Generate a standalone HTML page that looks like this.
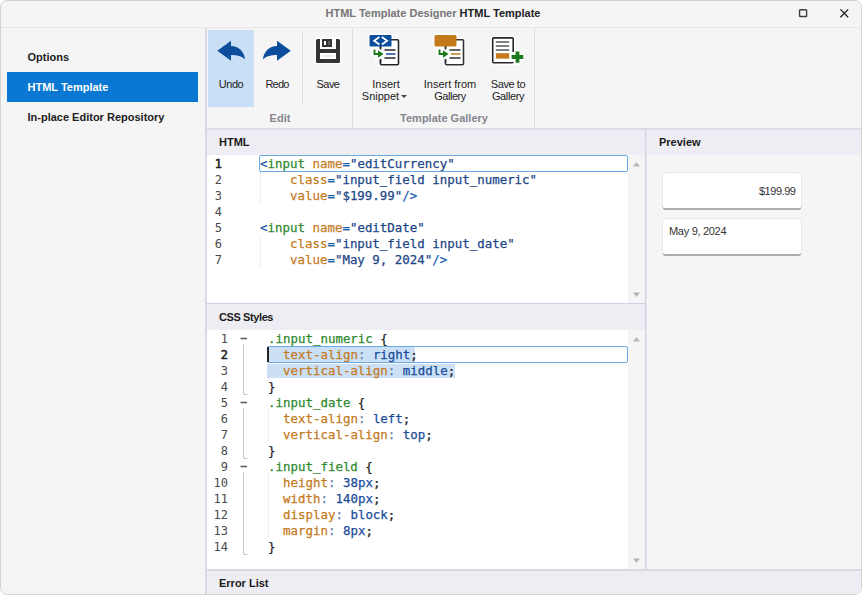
<!DOCTYPE html>
<html lang="en">
<head>
<meta charset="utf-8">
<title>HTML Template Designer</title>
<style>
*{box-sizing:border-box;margin:0;padding:0}
html,body{width:862px;height:595px;background:#fff;overflow:hidden}
body{font-family:"Liberation Sans",sans-serif;font-size:11px;color:#222;position:relative}
.abs{position:absolute}
#win{position:absolute;left:0;top:0;width:862px;height:595px;background:#f5f5f5;border:1px solid #d4d4d4;border-radius:7px;overflow:hidden}
#win>*{position:absolute}
.title{left:2px;top:0;width:860px;height:26px;text-align:center;line-height:25px;font-weight:bold;font-size:11px;color:#222}
.title .g{color:#767676}
.hl{background:#e3e3ec;height:1px}
.vl{background:#dadae5;width:2px}
.nav{left:6px;width:191px;height:30px;line-height:31px;padding-left:20.5px;font-weight:bold;color:#222}
.nav.sel{background:#0a78d3;color:#fff}
.lbl{text-align:center;line-height:12.5px;color:#222;white-space:nowrap}
.grp{font-weight:bold;color:#86868d;text-align:center}
.phead{background:#ededf3;height:25px;line-height:25px;font-weight:bold;padding-left:12px;color:#1a1a1a}
.ed{background:#fff}
.code{font-family:"DejaVu Sans Mono","Liberation Mono",monospace;font-size:12.45px;line-height:16px;white-space:pre;color:#222;-webkit-text-stroke:0.25px currentColor}
.ln b{font-weight:normal;-webkit-text-stroke:0.55px #222}.ln{font-family:"DejaVu Sans Mono","Liberation Mono",monospace;font-size:12px;line-height:16px;white-space:pre;color:#4a4a4a;text-align:right}
.b{color:#1f5fae}.g2{color:#2f8a2f}.o{color:#c47a22}.s{color:#1c4587}.c{color:#5f7fae}.n{color:#1a4c9a}.k{color:#222}.v{color:#1f5fae}
.box{background:#fff;border:1px solid #e6e6ec;border-bottom:2px solid #adadad;border-radius:4px;width:140px;height:38px;color:#333;letter-spacing:-0.45px}
</style>
</head>
<body>
<div id="win">
  <!-- title bar -->
  <div class="title"><span class="g">HTML Template Designer</span> HTML Template</div>
  <svg style="left:797px;top:7px;filter:drop-shadow(0 0 0.7px #fff)" width="11" height="11" viewBox="0 0 11 11"><rect x="1.600" y="1.700" width="7" height="6.800" rx="0.800" fill="none" stroke="#3a3a3a" stroke-width="1.400"/></svg>
  <svg style="left:838px;top:7px;filter:drop-shadow(0 0 0.7px #fff)" width="11" height="11" viewBox="0 0 11 11"><path d="M1.400 1.400 L9.200 9.200 M9.200 1.400 L1.400 9.200" stroke="#1c1c1c" stroke-width="1.300" fill="none"/></svg>
  <div class="hl" style="left:0;top:26px;width:862px;background:#e6e6ec"></div>

  <!-- left nav -->
  <div class="nav" style="top:41px">Options</div>
  <div class="nav sel" style="top:71px">HTML Template</div>
  <div class="nav" style="top:101px">In-place Editor Repository</div>
  <div class="vl" style="left:204px;top:27px;height:568px"></div>

  <!-- ribbon -->
  <div style="left:207px;top:29px;width:46px;height:77px;background:#c9dff5"></div>

  <!-- icons -->
  <svg style="left:214px;top:33px;filter:drop-shadow(0 0 0.6px #fff)" width="32" height="32" viewBox="0 0 32 32"><path d="M2.2 16.8 L16 6.8 V12 C24 12 29 17.5 30.2 25.5 C26.5 22 21.5 21 16 21 V26.8 Z" fill="#0c4e9b"/></svg>
  <svg style="left:260px;top:33px;filter:drop-shadow(0 0 0.6px #fff)" width="32" height="32" viewBox="0 0 32 32"><path d="M29.8 16.8 L16 6.8 V12 C8 12 3 17.5 1.8 25.5 C5.500 22 10.5 21 16 21 V26.800 Z" fill="#0c4e9b"/></svg>
  <svg style="left:311px;top:34px" width="32" height="32" viewBox="0 0 32 32">
    <rect x="2.5" y="2.500" width="27" height="27" rx="3" fill="#fff" opacity=".9"/>
    <rect x="4" y="4" width="24" height="24" rx="1.5" fill="#343434"/>
    <rect x="8" y="3.500" width="16" height="10.500" fill="#fff"/>
    <rect x="10" y="4" width="10" height="8" fill="#343434"/>
    <rect x="12" y="6" width="2" height="4" fill="#fff"/>
    <rect x="16.200" y="6" width="2" height="4" fill="#666"/>
    <rect x="8" y="18" width="16" height="6" fill="#fff"/>
    <rect x="10" y="20.500" width="12" height="1" fill="#ddd"/>
  </svg>
  <svg style="left:366px;top:32px" width="34" height="34" viewBox="-1 -1 34 34">
    <rect x="10.500" y="4" width="22" height="28.500" rx="2" fill="#fff" opacity=".9"/>
    <rect x="0" y="-0.500" width="25" height="14.500" rx="2" fill="#fff" opacity=".9"/>
    <path d="M3 13 H17 V26 H7 V21.500 H3 Z" fill="#fff" opacity=".9"/>
    <rect x="12.500" y="5.800" width="18" height="25" rx="1" fill="#fff" stroke="#262626" stroke-width="1.600"/>
    <rect x="9" y="14.500" width="6.500" height="11" fill="#fff"/>
    <path d="M12.500 12 V15.500 M12.500 25 V29" stroke="#262626" stroke-width="1.600"/>
    <rect x="1.500" y="1" width="22" height="11.500" rx="1" fill="#0c4e9b"/>
    <path d="M11.400 3 L6.200 6.800 L11.400 10.600 M13.900 3 L19.100 6.800 L13.900 10.600" stroke="#fff" stroke-width="1.800" fill="none"/>
    <path d="M16.500 16 H27.500 M16.500 24 H27.500" stroke="#262626" stroke-width="1.600"/>
    <path d="M18 20 H27.500" stroke="#0c4e9b" stroke-width="1.600"/>
    <path d="M6.500 15.500 V20 H10.500" stroke="#1c7a1c" stroke-width="1.900" fill="none"/>
    <path d="M10 16.200 L15.500 20 L10 23.800 Z" fill="#1c7a1c"/>
  </svg>
  <svg style="left:430.5px;top:32px" width="34" height="34" viewBox="-1 -1 34 34">
    <rect x="10.500" y="4" width="22" height="28.500" rx="2" fill="#fff" opacity=".9"/>
    <rect x="0" y="-0.500" width="25" height="14.500" rx="2" fill="#fff" opacity=".9"/>
    <path d="M3 13 H17 V26 H7 V21.500 H3 Z" fill="#fff" opacity=".9"/>
    <rect x="12.500" y="5.800" width="18" height="25" rx="1" fill="#fff" stroke="#303030" stroke-width="1.600"/>
    <rect x="9" y="14.500" width="6.500" height="11" fill="#fff"/>
    <path d="M12.500 12 V15.500 M12.500 25 V29" stroke="#303030" stroke-width="1.600"/>
    <rect x="1.500" y="1" width="22" height="11.500" rx="1.500" fill="#c4791a"/>
    <path d="M16.500 16 H27.500 M16.500 24 H27.500" stroke="#303030" stroke-width="1.600"/>
    <path d="M18 20 H27.500" stroke="#c4791a" stroke-width="1.600"/>
    <path d="M6.500 15.500 V20 H10.500" stroke="#1c7a1c" stroke-width="1.900" fill="none"/>
    <path d="M10 16.200 L15.500 20 L10 23.800 Z" fill="#1c7a1c"/>
  </svg>
  <svg style="left:487px;top:32px" width="36" height="34" viewBox="-1 -1 36 34">
    <rect x="1.500" y="1.500" width="25" height="29.500" rx="2.500" fill="#fff" opacity=".9"/>
    <path d="M25 15.500 H31.500 V20 H35.500 V27 H31.500 V31 H25 Z" fill="#fff" opacity=".9"/>
    <rect x="3.700" y="3.900" width="20.500" height="24.800" rx="1" fill="#fff" stroke="#262626" stroke-width="1.600"/>
    <rect x="23" y="18" width="3" height="10" fill="#fff"/>
    <path d="M6.800 8 H20.200 M6.800 12 H20.200 M6.800 16 H20.200" stroke="#585858" stroke-width="1.600"/>
    <rect x="6.800" y="19.200" width="13.400" height="5.400" fill="#c4791a"/>
    <path d="M22.600 23 H34.300 M28.500 17.400 V28.800" stroke="#1c7a1c" stroke-width="3.800"/>
  </svg>
  <!-- scroll arrows -->
  <svg style="left:632px;top:161px" width="7" height="5" viewBox="0 0 7 5"><path d="M0 4.500 L3.500 0 L7 4.500 Z" fill="#b4b4b4"/></svg>
  <svg style="left:632px;top:291px" width="7" height="5" viewBox="0 0 7 5"><path d="M0 0.500 L3.500 5 L7 0.500 Z" fill="#b4b4b4"/></svg>
  <svg style="left:632px;top:336px" width="7" height="5" viewBox="0 0 7 5"><path d="M0 4.500 L3.500 0 L7 4.500 Z" fill="#b4b4b4"/></svg>
  <svg style="left:632px;top:557px" width="7" height="5" viewBox="0 0 7 5"><path d="M0 0.500 L3.500 5 L7 0.500 Z" fill="#b4b4b4"/></svg>
  <div class="lbl" style="left:207px;top:76.6px;width:46px;letter-spacing:-0.45px">Undo</div>
  <div class="lbl" style="left:253px;top:76.6px;width:46px;letter-spacing:-0.8px">Redo</div>
  <div class="lbl" style="left:304px;top:76.6px;width:46px;letter-spacing:-0.55px">Save</div>
  <div class="lbl" style="left:355px;top:76.6px;width:60px">Insert<br><span style="position:relative;left:-1px">Snippet <svg width="6" height="3" viewBox="0 0 6 3" style="position:relative;top:-2px;left:-1px"><path d="M0 0 H6 L3 3 Z" fill="#444"/></svg></span></div>
  <div class="lbl" style="left:419px;top:76.6px;width:60px">Insert from<br><span style="letter-spacing:-0.45px">Gallery</span></div>
  <div class="lbl" style="left:477px;top:76.6px;width:60px;letter-spacing:-0.4px">Save to<br>Gallery</div>
  <div class="vl" style="left:301px;top:30px;height:74px;width:1px;background:#dcdce4"></div>
  <div class="vl" style="left:351px;top:27px;height:100px;width:1px;background:#dcdce4"></div>
  <div class="vl" style="left:533px;top:27px;height:100px;width:1px;background:#dcdce4"></div>
  <div class="grp" style="left:249px;top:111px;width:60px">Edit</div>
  <div class="grp" style="left:383px;top:111px;width:120px">Template Gallery</div>
  <div class="hl" style="left:206px;top:127px;width:656px;height:2px;background:#dcdce6"></div>

  <!-- HTML panel -->
  <div class="phead" style="left:206px;top:129px;width:438px">HTML</div>
  <div class="ed" style="left:206px;top:154px;width:421px;height:148px"></div>
  <div class="phead" style="left:646px;top:129px;width:216px">Preview</div>
  <div class="vl" style="left:644px;top:129px;height:440px;background:linear-gradient(90deg,#d0d2e2 0,#d0d2e2 50%,#e6e7ee 50%,#e6e7ee 100%)"></div>
  <div class="hl" style="left:206px;top:302px;width:438px;height:1px;background:#ced1e2"></div>

  <!-- CSS panel -->
  <div class="phead" style="left:206px;top:303px;width:438px;height:26px;line-height:27px;letter-spacing:-0.4px">CSS Styles</div>
  <div class="ed" style="left:206px;top:329px;width:421px;height:240px"></div>
  <div class="hl" style="left:206px;top:568px;width:656px;height:2px;background:#d9d9e4"></div>
  <div class="phead" style="left:206px;top:570px;width:656px;height:24px;line-height:25px">Error List</div>

  <!-- preview boxes -->
  <div class="box" style="left:661px;top:171px;text-align:right;padding:12px 5.5px 0 0">$199.99</div>
  <div class="box" style="left:661px;top:217px;padding:6px 0 0 6px;letter-spacing:-0.3px">May 9, 2024</div>

  <!-- HTML editor content -->
  <div style="left:258px;top:154px;width:369px;height:17px;border:1px solid #6aaae0;border-radius:2px"></div>
  <div class="ln" style="left:204px;top:155px;width:17px"><b style="color:#222">1</b>
2
3
4
5
6
7</div>
  <div class="code" style="left:259px;top:155px"><span class="b">&lt;</span><span class="g2">input</span> <span class="o">name</span><span class="b">=</span><span class="s">"editCurrency"</span>
    <span class="o">class</span><span class="b">=</span><span class="s">"input_field input_numeric"</span>
    <span class="o">value</span><span class="b">=</span><span class="s">"$199.99"</span><span class="b">/&gt;</span>

<span class="b">&lt;</span><span class="g2">input</span> <span class="o">name</span><span class="b">=</span><span class="s">"editDate"</span>
    <span class="o">class</span><span class="b">=</span><span class="s">"input_field input_date"</span>
    <span class="o">value</span><span class="b">=</span><span class="s">"May 9, 2024"</span><span class="b">/&gt;</span></div>


  <!-- fold markers -->
  <svg style="left:236px;top:329px" width="14" height="230" viewBox="0 0 14 230">
    <g stroke="#555" stroke-width="1.300" fill="none">
      <path d="M3.500 8.500 H10 M3.500 72.500 H10 M3.500 136.500 H10"/>
    </g>
    <g stroke="#c9c9c9" stroke-width="1" fill="none">
      <path d="M6.500 14 V64.500 H10.500 M6.500 78 V128.500 H10.500 M6.500 142 V224.500 H10.500"/>
    </g>
  </svg>
  <svg style="left:259px;top:171px" width="10" height="100" viewBox="0 0 10 100">
    <path d="M0.500 0 V32 M0.500 64 V96" stroke="#dedede" stroke-width="1" stroke-dasharray="1 1"/>
  </svg>
  <svg style="left:267px;top:345px" width="10" height="200" viewBox="0 0 10 200">
    <path d="M0.500 32 V33 M0.500 64 V96 M0.500 128 V192" stroke="#dcdcdc" stroke-width="1" stroke-dasharray="1 1"/>
  </svg>
  <!-- CSS editor content -->
  <div style="left:266px;top:346px;width:148px;height:15px;background:#cbe0f5"></div>
  <div style="left:266px;top:363px;width:188px;height:14px;background:#cbe0f5"></div>
  <div style="left:266px;top:345px;width:361px;height:17px;border:1px solid #6aaae0;border-radius:2px"></div>
  <div style="left:266px;top:346px;width:2px;height:15px;background:#222"></div>
  <div class="ln" style="left:204px;top:329px;width:23px;transform:translateY(0.5px)">1
<b style="color:#222">2</b>
3
4
5
6
7
8
9
10
11
12
13
14</div>
  <div class="code" style="left:267px;top:329px;transform:translateY(0.5px)"><span class="g2">.input_numeric</span> {
  <span class="o">text-align</span><span class="c">:</span> <span class="n">right</span>;
  <span class="o">vertical-align</span><span class="c">:</span> <span class="n">middle</span>;
}
<span class="g2">.input_date</span> {
  <span class="o">text-align</span><span class="c">:</span> <span class="n">left</span>;
  <span class="o">vertical-align</span><span class="c">:</span> <span class="n">top</span>;
}
<span class="g2">.input_field</span> {
  <span class="o">height</span><span class="c">:</span> <span class="n">38px</span>;
  <span class="o">width</span><span class="c">:</span> <span class="n">140px</span>;
  <span class="o">display</span><span class="c">:</span> <span class="n">block</span>;
  <span class="o">margin</span><span class="c">:</span> <span class="n">8px</span>;
}</div>
</div>
</body>
</html>
